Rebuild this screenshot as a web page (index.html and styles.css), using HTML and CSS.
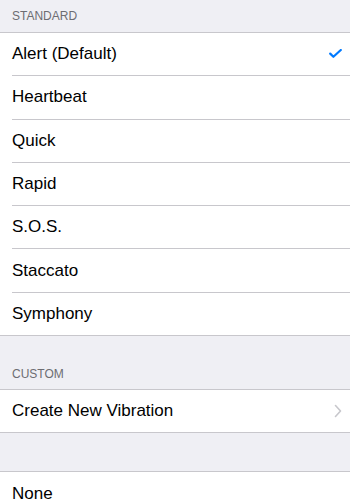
FILE: index.html
```html
<!DOCTYPE html>
<html>
  <head>
    <title>Vibration</title>
    <link rel="stylesheet" href="styles.css">
  </head>
  <body>
    <div class="section-header first">STANDARD</div>
    <div class="group">
      <div class="row">
        <span class="label">Alert (Default)</span>
        <svg class="check" width="13" height="10" viewBox="0 0 13 10">
          <path d="M1.2 4.6 L4.4 7.8 L11.8 1" fill="none" stroke="#007aff" stroke-width="2.2" stroke-linecap="round" stroke-linejoin="round"/>
        </svg>
      </div>
      <div class="row"><span class="label">Heartbeat</span></div>
      <div class="row"><span class="label">Quick</span></div>
      <div class="row"><span class="label">Rapid</span></div>
      <div class="row"><span class="label">S.O.S.</span></div>
      <div class="row"><span class="label">Staccato</span></div>
      <div class="row last"><span class="label">Symphony</span></div>
    </div>

    <div class="section-header">CUSTOM</div>
    <div class="group">
      <div class="row last">
        <span class="label">Create New Vibration</span>
        <svg class="chevron" width="8" height="14" viewBox="0 0 8 14">
          <path d="M1.5 1.5 L6.5 7 L1.5 12.5" fill="none" stroke="#c7c7cc" stroke-width="1.6" stroke-linecap="round" stroke-linejoin="round"/>
        </svg>
      </div>
    </div>

    <div class="spacer"></div>
    <div class="group">
      <div class="row last"><span class="label">None</span></div>
    </div>
  </body>
</html>
```

FILE: styles.css
```css
body {
  margin: 0;
  padding: 0;
  background-color: #efeff4;
  font-family: "Liberation Sans", Arial, sans-serif;
  overflow: hidden;
}

.section-header {
  height: 53px;
  box-sizing: border-box;
  display: flex;
  align-items: flex-end;
  padding: 0 12px 8px 12px;
  font-size: 12px;
  color: #6d6d72;
}

.section-header.first {
  height: 32px;
  padding-bottom: 9px;
}

.group {
  background-color: #ffffff;
  border-top: 1px solid #c8c7cc;
  border-bottom: 1px solid #c8c7cc;
}

.spacer {
  height: 38px;
}

.row {
  height: 43.3px;
  box-sizing: border-box;
  margin-left: 12px;
  padding-right: 8px;
  display: flex;
  align-items: center;
  justify-content: space-between;
  border-bottom: 1px solid #c8c7cc;
}

.row.last {
  border-bottom: none;
  height: 42.3px;
}

.label {
  font-size: 17px;
  color: #000000;
}
```
